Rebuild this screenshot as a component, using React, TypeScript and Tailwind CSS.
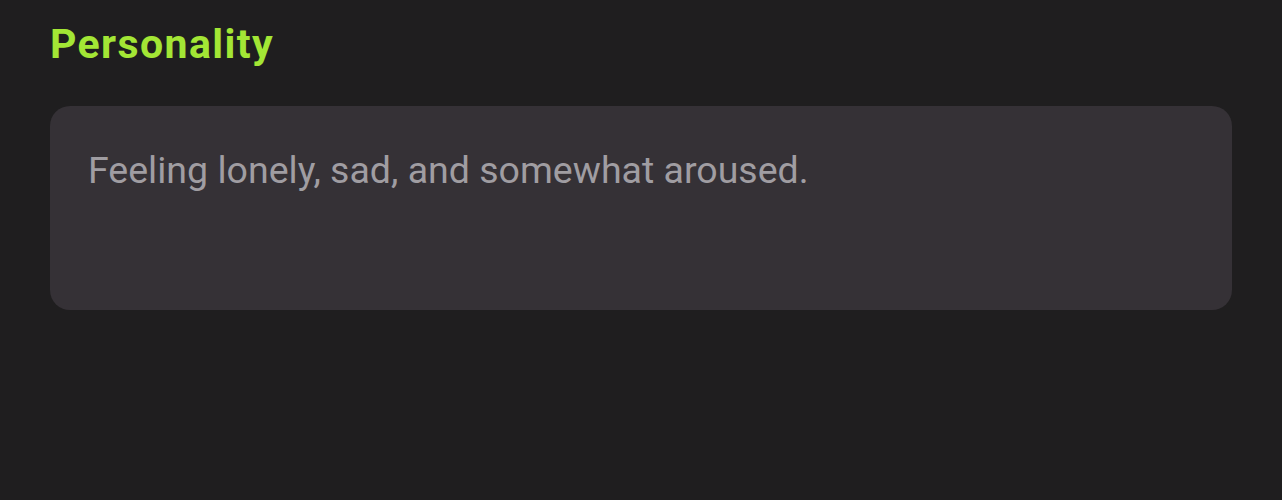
export default function App() {
    return (
        <div
            className="w-[1282px] h-[500px] bg-[#1f1e1f] px-[50px] pt-[19px]"
            style={{ fontFamily: "Roboto, 'Liberation Sans', sans-serif" }}
        >
            <h2 className="text-[41px] leading-[50px] font-bold tracking-[1.4px] text-[#a3e635]">
                Personality
            </h2>
            <div className="mt-[37px] w-[1182px] h-[204px] rounded-[20px] bg-[#353136] px-[38px] pt-[42px]">
                <p className="text-[37.5px] leading-[44px] text-[#a09da2]">
                    Feeling lonely, sad, and somewhat aroused.
                </p>
            </div>
        </div>
    );
}
